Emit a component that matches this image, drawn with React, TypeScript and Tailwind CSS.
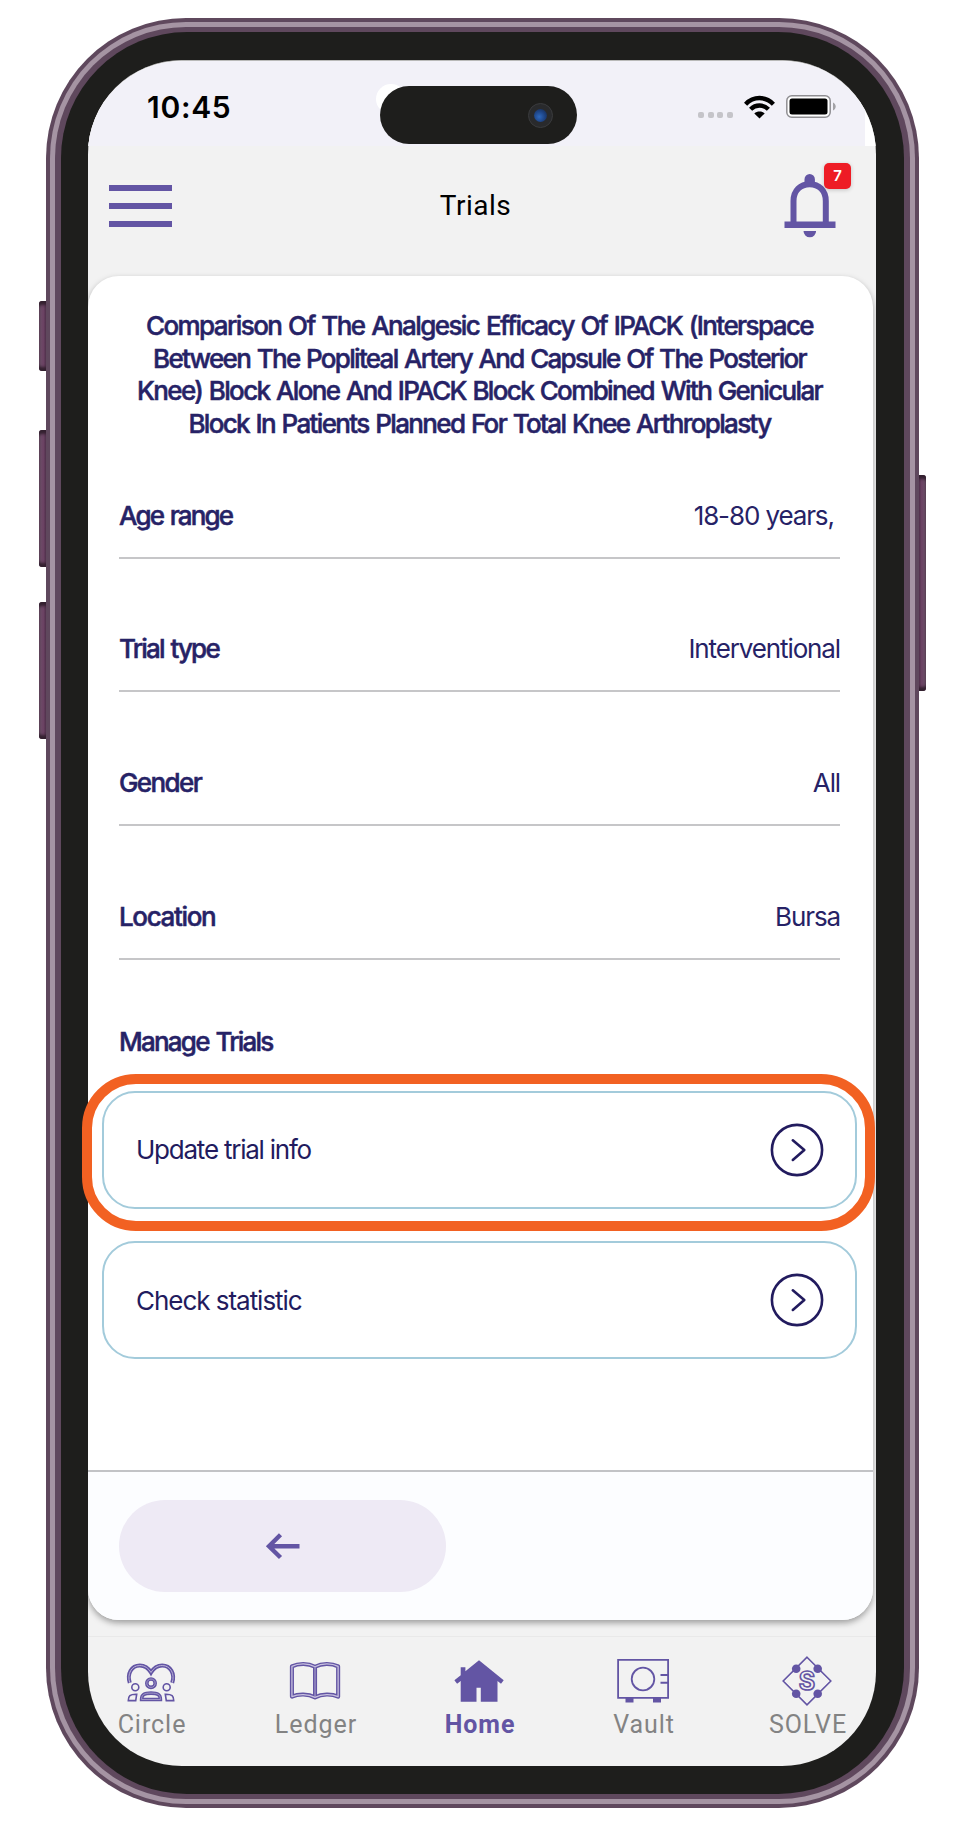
import type { ReactNode } from 'react'
import clsx from 'clsx'

function WifiIcon() {
  return (
    <svg className="block h-[24px] w-[31px]" viewBox="0 0 31 24">
      <g fill="none" stroke="#000" strokeWidth="4.4">
        <path d="M1.6 9.2C9.5 1 21.5 1 29.4 9.2" />
        <path d="M6.6 14.2c5-5 12.8-5 17.8 0" />
      </g>
      <path d="M15.5 23.600l-5.2-5.2c3-2.600 7.400-2.600 10.400 0z" fill="#000" />
    </svg>
  )
}

function BatteryIcon() {
  return (
    <svg className="block h-[23px] w-[50px]" viewBox="0 0 50 23">
      <rect x=".8" y=".8" width="43.400" height="21.400" rx="5" fill="#fff" stroke="#8f8e92" strokeWidth="1.5" />
      <rect x="3.500" y="3.500" width="38" height="16" rx="2.500" fill="#000" />
      <path d="M47 7.500c3.600 1.500 3.600 6.500 0 8z" fill="#a3a2a6" />
    </svg>
  )
}

function BellIcon() {
  return (
    <svg className="block h-[64px] w-[52px]" viewBox="0 0 52 64">
      <path d="M9.500 48.500V26.500C9.500 16 16.500 9.700 25.700 9.700S41.800 16 41.800 26.500v22" transform="translate(0 .5)" fill="none" stroke="#6355a4" strokeWidth="6" />
      <path d="M20.500 9V5.200a5.200 5.200 0 0 1 10.400 0V9zM.500 47.500h51V54H.500zM19.500 57h12.600a6.300 6.300 0 0 1-12.600 0z" fill="#6355a4" />
    </svg>
  )
}

function ArrowRing() {
  return (
    <svg className="block size-[54px]" viewBox="0 0 54 54" fill="none" stroke="#221b5e" strokeWidth="2.600">
      <circle cx="27" cy="27" r="25.100" />
      <path d="M22.800 17.300 34.300 27 22.800 36.900" strokeLinecap="round" strokeLinejoin="round" />
    </svg>
  )
}

function CircleIcon() {
  const heart = 'M4.800 29.800C1.800 21 6.500 12.500 14.800 12.500c5 0 8.700 2.800 11.200 7 2.500-4.200 6.200-7 11.200-7 8.300 0 13 8.500 10 17.300'
  const torso = 'M16.600 46.500c0-5 2.500-6.400 9.400-6.400s9.400 1.400 9.400 6.400z'
  return (
    <svg className="block h-[50px] w-[52px]" viewBox="0 0 52 50" fill="none" stroke="#6355a4">
      <path d={heart} strokeWidth="4" />
      <path d={heart} stroke="#b9b1d6" strokeWidth="1" />
      <circle cx="26" cy="30.200" r="4.200" strokeWidth="3.600" />
      <circle cx="26" cy="30.200" r="4.200" stroke="#b9b1d6" strokeWidth=".7" />
      <circle cx="10.300" cy="34.200" r="3.500" strokeWidth="1.600" />
      <circle cx="41.700" cy="34.200" r="3.500" strokeWidth="1.600" />
      <path d={torso} strokeWidth="3.600" />
      <path d={torso} stroke="#b9b1d6" strokeWidth=".7" />
      <path d="M3.300 47.600c0-4.500 1.400-6.600 8.400-6.400l-1 6.400zM48.700 47.600c0-4.500-1.400-6.600-8.400-6.400l1 6.400z" strokeWidth="1.600" />
    </svg>
  )
}

function LedgerIcon() {
  const book = 'M27 12.500C20 8.800 10 8.800 3.300 12.200v31C10 40.200 20 40.200 27 44c7-3.800 17-3.800 23.700-.8v-31C44 8.800 34 8.800 27 12.500z'
  return (
    <svg className="mt-px block h-[50px] w-[54px]" viewBox="0 0 54 50" fill="none" stroke="#6355a4">
      <g transform="translate(.7 .5) scale(.975)">
        <path d={book} strokeWidth="4.200" strokeLinejoin="round" />
        <path d="M27 12.500V44" strokeWidth="4.200" />
        <path d={book} stroke="#c9c2e0" strokeWidth="1.300" strokeLinejoin="round" />
        <path d="M27 12.500V44" stroke="#b2a9d2" strokeWidth="1" />
      </g>
    </svg>
  )
}

function HomeIcon() {
  return (
    <svg className="block h-[50px] w-[52px]" viewBox="0 0 52 50" fill="#6355a4">
      <path d="M26 7.200 50.700 27.300l-2.700 3.400-3.500-2.600v20.600H27.800V34.800h-4.300v13.900H7.700V28.100l-3.600 2.600-2.700-3.400 6.300-5.100V14.200h4.700v4.100z" />
    </svg>
  )
}

function VaultIcon() {
  return (
    <svg className="-mt-px block h-[51px] w-[52px]" viewBox="0 0 52 51" fill="none" stroke="#6355a4" strokeWidth="1.800">
      <path d="M1.100 7.900h50v38h-50z" />
      <circle cx="26" cy="27" r="11.300" />
      <path d="M43.500 23h7.600M43.500 30.700h7.600" strokeWidth="2" />
      <path d="M8.500 46h8v4.500h-8zM36 46h8v4.500h-8z" fill="#6355a4" stroke="none" />
    </svg>
  )
}

function SolveIcon() {
  return (
    <svg className="mt-[3px] block size-[50px]" viewBox="0 0 50 50" fill="none" stroke="#6355a4" strokeWidth="1.600">
      <path d="M25 1.200 48.800 25 25 48.800 1.200 25z" />
      <g fill="#6355a4" stroke="none">
        <circle cx="14.200" cy="12.700" r="4.300" />
        <circle cx="35.700" cy="12.700" r="4.300" />
        <circle cx="14.200" cy="37.800" r="4.300" />
        <circle cx="35.700" cy="37.800" r="4.300" />
      </g>
      <text x="25.500" y="34" textAnchor="middle" fontFamily="Inter, sans-serif" fontSize="25" fontWeight="700" strokeWidth="1.600">S</text>
    </svg>
  )
}

function DetailRow({ label, value, labelTracking }: { label: string; value: string; labelTracking: string }) {
  return (
    <div className="flex h-[133.800px] items-end">
      <div className="flex w-full items-center justify-between border-b-2 border-[#c6c6c8] pb-[26px] text-[26px] leading-[31px] text-[#262266]">
        <span className={clsx('font-medium [word-spacing:1.5px] [-webkit-text-stroke:0.5px_#262266]', labelTracking)}>{label}</span>
        <span className="tracking-[-1.120px] whitespace-pre">{value}</span>
      </div>
    </div>
  )
}

function ActionRow({ label, tracking }: { label: string; tracking: string }) {
  return (
    <button className={clsx('flex h-[118px] w-full items-center justify-between rounded-[33px] border-2 border-[#a3cbdb] bg-white pr-[31px] pl-[32px] text-[26px] text-[#221b5e]', tracking)}>
      {label}
      <ArrowRing />
    </button>
  )
}

function NavItem({ label, active, children }: { label: string; active?: boolean; children: ReactNode }) {
  return (
    <a className={clsx('flex w-[164px] shrink-0 flex-col items-center font-[Roboto,sans-serif] text-[25px] leading-[30px] tracking-[0.950px]', active ? 'font-bold text-[#6355a4]' : 'text-[#838383]')}>
      <span className="mr-[2px] flex h-[52px] items-start justify-center">{children}</span>
      <span className="mt-[5px]">{label}</span>
    </a>
  )
}

function SideKey({ className }: { className: string }) {
  return <div className={clsx('absolute w-[9px] bg-linear-to-r from-[#6b5068] via-[#6b4263] to-[#3b2339] shadow-[inset_0_5px_3px_-1px_#33202f,inset_0_-5px_3px_-1px_#33202f]', className)} />
}

const details = [
  { label: 'Age range', value: '18-80 years, ', labelTracking: 'tracking-[-1.850px]' },
  { label: 'Trial type', value: 'Interventional', labelTracking: 'tracking-[-1.800px]' },
  { label: 'Gender', value: 'All', labelTracking: 'tracking-[-1.600px]' },
  { label: 'Location', value: 'Bursa', labelTracking: 'tracking-[-1.350px]' },
]

export default function App() {
  return (
    <div className="h-[1825px] w-[957px] overflow-hidden bg-white pt-[18px] pl-[46px] font-[Inter,sans-serif]">
      <div className="relative h-[1790px] w-[873px]">
        <SideKey className="top-[283px] -left-[7px] h-[70px] rounded-l-[3px]" />
        <SideKey className="top-[412px] -left-[7px] h-[137px] rounded-l-[3px]" />
        <SideKey className="top-[584px] -left-[7px] h-[137px] rounded-l-[3px]" />
        <SideKey className="top-[457px] -right-[7px] h-[216px] rotate-180 rounded-l-[3px]" />

        <div className="relative h-full rounded-[140px] bg-[#5f485d] p-[4px]">
          <div className="h-full rounded-[136px] bg-[#a594a3] p-[5px]">
            <div className="h-full rounded-[131px] bg-[#5f485d] px-[6px] py-[5px]">
              <div className="h-full rounded-[126px] bg-[#1e1e1c] px-[27px] py-[28px]">
                <main className="flex h-[1706px] w-[788px] flex-col overflow-hidden rounded-[94px] border-t border-[#b9b9b8] bg-[#f2f2f2]">
                  <div className="flex h-[85px] shrink-0 bg-white">
                    <div className="relative flex w-[777px] items-start bg-[#f2f1f8]">
                      <time className="mt-[28px] ml-[59px] text-[30px] leading-[36px] font-semibold tracking-[0.700px] text-black">10:45</time>
                      <div className="absolute top-[23px] left-[288px] size-[30px] rounded-full bg-white" />
                      <div className="absolute top-[25px] left-[292px] flex h-[58px] w-[197px] items-center justify-end rounded-full bg-[#1e1e1c] pr-[24px]">
                        <div className="grid size-[25px] place-items-center rounded-full border border-[#3a3b3d] bg-[#292a2c]">
                          <div className="size-[13px] rounded-full bg-radial-[at_40%_60%] from-[#2e68bd] via-[#1d4384] to-[#17243d]" />
                        </div>
                      </div>
                      <div className="mt-[34px] ml-auto flex items-start pr-[29px]">
                        <div className="mt-[17px] flex gap-[3.600px]">
                          <i className="size-[6px] rounded-[2px] bg-[#c5c4c9]" />
                          <i className="size-[6px] rounded-[2px] bg-[#c5c4c9]" />
                          <i className="size-[6px] rounded-[2px] bg-[#c5c4c9]" />
                          <i className="size-[6px] rounded-[2px] bg-[#c5c4c9]" />
                        </div>
                        <div className="ml-[11px]"><WifiIcon /></div>
                        <div className="ml-[11px]"><BatteryIcon /></div>
                      </div>
                    </div>
                  </div>

                  <header className="grid h-[130px] shrink-0 grid-cols-[1fr_auto_1fr] items-start pr-[34px] pl-[21px]">
                    <div className="mt-[39px] flex w-[62.500px] flex-col gap-[12px]">
                      <i className="h-[6px] bg-[#6355a4]" />
                      <i className="h-[6px] bg-[#6355a4]" />
                      <i className="h-[6px] bg-[#6355a4]" />
                    </div>
                    <h1 className="mt-[43px] font-[Roboto,sans-serif] text-[28px] leading-[34px] tracking-[0.500px] text-black">Trials</h1>
                    <div className="relative mt-[28px] mr-[6px] justify-self-end">
                      <BellIcon />
                      <span className="absolute -top-[11px] left-[40px] grid h-[26px] w-[27px] place-items-center rounded-[5px] bg-[#ee1c25] text-[15px] font-semibold text-white shadow-[0_1px_4px_rgba(0,0,0,0.2)]">7</span>
                    </div>
                  </header>

                  <section className="flex h-[1344px] w-[785px] shrink-0 flex-col overflow-hidden rounded-[31px] bg-white shadow-[0_3px_6px_rgba(0,0,0,0.35)]">
                    <div className="pt-[34px] pr-[33px] pl-[31px]">
                      <h2 className="flex flex-col items-center text-[26px] leading-[32.700px] font-medium whitespace-nowrap text-[#262266] [word-spacing:1.3px] [-webkit-text-stroke:0.5px_#262266]">
                        <span className="tracking-[-1.580px]">Comparison Of The Analgesic Efficacy Of IPACK (Interspace</span>
                        <span className="tracking-[-1.700px]">Between The Popliteal Artery And Capsule Of The Posterior</span>
                        <span className="tracking-[-1.640px]">Knee) Block Alone And IPACK Block Combined With Genicular</span>
                        <span className="tracking-[-1.650px]">Block In Patients Planned For Total Knee Arthroplasty</span>
                      </h2>
                      <div className="-mt-[16px]">
                        {details.map((d) => (
                          <DetailRow key={d.label} {...d} />
                        ))}
                      </div>
                      <h3 className="mt-[65.500px] text-[26px] leading-[32px] font-medium tracking-[-1.760px] text-[#262266] [word-spacing:1.5px] [-webkit-text-stroke:0.5px_#262266]">Manage Trials</h3>
                    </div>
                    <div className="mt-[33px] flex flex-col gap-[32.500px] pr-[16px] pl-[14px]">
                      <ActionRow label="Update trial info" tracking="tracking-[-1.230px]" />
                      <ActionRow label="Check statistic" tracking="tracking-[-1.030px]" />
                    </div>
                    <footer className="mt-auto h-[150px] border-t-2 border-[#c2c3c6] bg-[#fcfdff] pt-[28px] pl-[31px]">
                      <button className="grid h-[92px] w-[327px] place-items-center rounded-full bg-[#eeeaf5]">
                        <svg className="block h-[28px] w-[36px]" viewBox="0 0 36 28" fill="none" stroke="#6355a4" strokeWidth="4.400">
                          <path d="M34.500 14.300H5M15.500 2.800 4 14.300l11.500 11.200" />
                        </svg>
                      </button>
                    </footer>
                  </section>

                  <nav className="mt-[16px] flex flex-1 justify-center border-t border-[#e9e9e9] pt-[16px] pr-[4px]">
                    <NavItem label="Circle"><CircleIcon /></NavItem>
                    <NavItem label="Ledger"><LedgerIcon /></NavItem>
                    <NavItem label="Home" active><HomeIcon /></NavItem>
                    <NavItem label="Vault"><VaultIcon /></NavItem>
                    <NavItem label="SOLVE"><SolveIcon /></NavItem>
                  </nav>
                </main>
              </div>
            </div>
          </div>
        </div>

        <div className="pointer-events-none absolute top-[1056px] left-[36px] h-[157px] w-[793px] rounded-[54px] border-[10px] border-[#f26122]" />
      </div>
    </div>
  )
}
